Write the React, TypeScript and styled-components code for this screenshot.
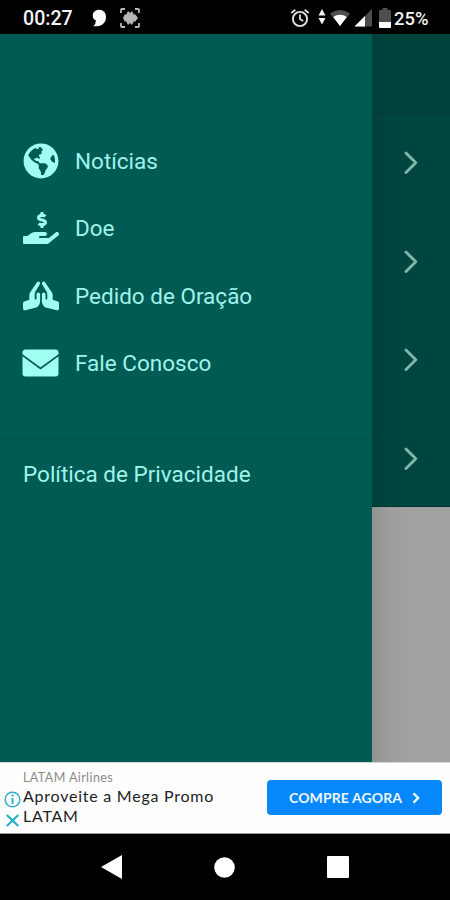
import React from "react";
import styled, { createGlobalStyle } from "styled-components";
import { FaGlobeAmericas, FaHandHoldingUsd, FaPrayingHands } from "react-icons/fa";

const GlobalStyle = createGlobalStyle`
  * { box-sizing: border-box; }
  body { margin: 0; background: #000; font-family: Roboto, sans-serif; }
  svg { display: block; flex: none; }
`;

const Screen = styled.div`
  width: 450px;
  height: 900px;
  display: flex;
  flex-direction: column;
  background: #000;
  overflow: hidden;
`;

const StatusBar = styled.header`
  height: 34px;
  flex: none;
  display: flex;
  align-items: center;
  padding: 2px 22px 0 23px;
  color: #f4f4f4;
`;

const StatusText = styled.span<{ $width: number; $size: number }>`
  width: ${(p) => p.$width}px;
  font-size: ${(p) => p.$size}px;
  font-weight: 500;
  line-height: 23px;
  white-space: nowrap;
`;

const StatusGap = styled.span<{ $w: number }>`
  width: ${(p) => p.$w}px;
`;

const Notifications = styled.div`
  display: flex;
  align-items: center;
  gap: 13px;
  margin-left: 18px;
`;

const Indicators = styled.div`
  display: flex;
  align-items: center;
  margin-left: auto;
`;

const Content = styled.main`
  height: 728px;
  flex: none;
  display: flex;
`;

const Drawer = styled.nav`
  width: 372px;
  flex: none;
  background: #005b54;
  color: #a0f3e9;
`;

const DrawerHeader = styled.div`
  height: 73px;
  border-bottom: 1px solid #00584f;
`;

const Menu = styled.ul`
  list-style: none;
  margin: 0;
  padding: 20px 0 0;
  height: 333px;
  border-bottom: 1px solid #00544e;
`;

const MenuItem = styled.li`
  height: 67.5px;
  display: flex;
  align-items: center;
  padding-left: 22px;
`;

const IconSlot = styled.span`
  width: 37px;
  display: flex;
  justify-content: center;
  margin-right: 16px;
  color: #9ffff3;
`;

const Label = styled.span`
  font-size: 22.5px;
  line-height: 30px;
  white-space: nowrap;
`;

const Policy = styled.div`
  display: flex;
  padding: 19px 0 0 23px;
`;

const Backdrop = styled.section`
  flex: 1;
  display: flex;
  flex-direction: column;
  background: linear-gradient(90deg, #929292 0, #9e9e9e 18px, #a2a2a2 40px);
`;

const PageHeader = styled.div`
  height: 80px;
  background: linear-gradient(90deg, #003f3a 0, #00433d 22px);
  border-bottom: 1px solid #003a35;
`;

const PageRows = styled.div`
  height: 393px;
  padding-left: 32px;
  background: linear-gradient(90deg, #003f3a 0, #004640 22px);
  border-bottom: 1px solid #003630;
`;

const PageRow = styled.div`
  height: 98.5px;
  display: flex;
  align-items: center;
`;

const AdBanner = styled.aside`
  height: 72px;
  flex: none;
  display: flex;
  background: #fefefe;
  border-top: 1px solid #c9d7d5;
  border-bottom: 1px solid #999;
`;

const AdControls = styled.div`
  width: 23px;
  padding: 28px 0 0 4px;
  display: flex;
  flex-direction: column;
  gap: 5px;
`;

const AdCopy = styled.div`
  width: 244px;
  padding-top: 6px;
  font-family: Lato, sans-serif;
`;

const Advertiser = styled.div`
  font-size: 12.5px;
  line-height: 17px;
  letter-spacing: 0.42px;
  color: #8a8a8a;
`;

const AdHeadline = styled.div`
  font-size: 16px;
  line-height: 19.5px;
  letter-spacing: 0.76px;
  color: #222;
  white-space: nowrap;
`;

const AdButton = styled.button`
  width: 175px;
  height: 35px;
  margin-top: 17px;
  padding: 0 21px 0 22px;
  display: flex;
  align-items: center;
  justify-content: space-between;
  border: 0;
  border-radius: 4px;
  background: #0688fb;
  color: #eff8ff;
  font: 700 14px/20px Lato, sans-serif;
  letter-spacing: 0.1px;
  white-space: nowrap;
`;

const NavigationBar = styled.footer`
  flex: 1;
  display: flex;
  align-items: center;
  justify-content: space-between;
  padding: 0 101px;
`;

const ChatIcon = () => (
  <svg width="15" height="18" viewBox="0 0 15 18">
    <path fill="#fff" d="M6.5.8C11 .5 14 3.4 14 8c0 5.2-3.6 9.2-9.3 9.3H.8c2-.8 2.7-2.2 2.6-3.7l.6-2C2 10.8.5 9 .8 6.2 1 3.2 3.4 1 6.5.8Z" />
  </svg>
);

const ScanIcon = () => (
  <svg width="20" height="20" viewBox="0 0 20 20" fill="none">
    <path stroke="#b8b8b8" strokeWidth="1.8" d="M1 5V2q0-1 1-1h3M15 1h3q1 0 1 1v3M1 15v3q0 1 1 1h3M15 19h3q1 0 1-1v-3" />
    <path fill="#b4b4b4" d="m3 10 2-4 1 1 2-4 2 2 2-2 2 4 1-1 3 4-3 4-1-1-2 4-2-2-2 2-2-4-1 1Z" />
  </svg>
);

const AlarmIcon = () => (
  <svg width="20" height="20" viewBox="0 0 20 20" fill="none" stroke="#dedede">
    <circle cx="10" cy="11" r="7.1" strokeWidth="1.9" />
    <path strokeWidth="1.8" d="m1.3 5 4-3.3M18.7 5l-4-3.3M10 6.5V11l3.2 2" />
  </svg>
);

const DataIcon = () => (
  <svg width="8" height="18" viewBox="0 0 8 18" fill="#f3f3f3">
    <path d="M4 0 7.5 6.5h-7ZM.5 9h7L4 15.5Z" />
  </svg>
);

const WifiIcon = () => (
  <svg width="22" height="18" viewBox="0 0 22 18">
    <path fill="#505050" d="M1 4.5Q11-2.7 21 4.5L11 17Z" />
    <path fill="#fff" d="M4.2 8q6.8-4.3 13.6 0L11 17Z" />
  </svg>
);

const SignalIcon = () => (
  <svg width="18" height="18" viewBox="0 0 18 18">
    <path fill="#4c4c4c" d="M18 0v17.5H.5Z" />
    <path fill="#fff" d="M11 7v10.5H.5Z" />
  </svg>
);

const BatteryIcon = () => (
  <svg width="12" height="20" viewBox="0 0 12 20">
    <path fill="#4e4e4e" d="M3.5 0h5v2H11q1 0 1 1v12H0V3q0-1 1-1h2.5Z" />
    <path fill="#fff" d="M0 14h12v5q0 1-1 1H1q-1 0-1-1Z" />
  </svg>
);

const MailIcon = () => (
  <svg width="37" height="28" viewBox="0 0 37 28">
    <rect x="0.5" y="0.5" width="36" height="27" rx="3" fill="currentColor" />
    <path d="m0 6 18.5 13.5L37 6" fill="none" stroke="#005b54" strokeWidth="1.8" />
  </svg>
);

const Chevron = () => (
  <svg width="14" height="24" viewBox="0 0 14 24">
    <path d="m2 2 9.8 9.7L2 21.5" fill="none" stroke="#80b5ab" strokeWidth="2.9" strokeLinecap="round" strokeLinejoin="round" />
  </svg>
);

const InfoIcon = () => (
  <svg width="17" height="17" viewBox="0 0 17 17" fill="none" stroke="#2db2ca">
    <circle cx="8.5" cy="8.5" r="7.3" strokeWidth="1.5" />
    <path strokeWidth="2" d="M8.5 3.5v2M8.5 7v6" />
  </svg>
);

const CloseIcon = () => (
  <svg width="17" height="15" viewBox="0 0 17 15">
    <path d="m2.8 2 11.5 11M14.3 2 2.8 13" stroke="#20adc7" strokeWidth="2" />
  </svg>
);

const ButtonArrow = () => (
  <svg width="10" height="12" viewBox="0 0 10 12">
    <path d="m2.5 1.4 4.7 4.6-4.7 4.6" fill="none" stroke="currentColor" strokeWidth="2.3" />
  </svg>
);

const menuItems = [
  { label: "Notícias", icon: <FaGlobeAmericas size={36} /> },
  { label: "Doe", icon: <FaHandHoldingUsd size={36} /> },
  { label: "Pedido de Oração", icon: <FaPrayingHands size={36} /> },
  { label: "Fale Conosco", icon: <MailIcon /> },
];

export default function App() {
  return (
    <>
      <GlobalStyle />
      <Screen>
        <StatusBar>
          <StatusText $width={51} $size={19.6}>00:27</StatusText>
          <Notifications><ChatIcon /><ScanIcon /></Notifications>
          <Indicators>
            <AlarmIcon />
            <StatusGap $w={8} /><DataIcon />
            <StatusGap $w={3} /><WifiIcon />
            <StatusGap $w={3} /><SignalIcon />
            <StatusGap $w={7} /><BatteryIcon />
            <StatusGap $w={3} /><StatusText $width={34} $size={18.4}>25%</StatusText>
          </Indicators>
        </StatusBar>
        <Content>
          <Drawer>
            <DrawerHeader />
            <Menu>
              {menuItems.map((item) => (
                <MenuItem key={item.label}>
                  <IconSlot>{item.icon}</IconSlot>
                  <Label>{item.label}</Label>
                </MenuItem>
              ))}
            </Menu>
            <Policy><Label>Política de Privacidade</Label></Policy>
          </Drawer>
          <Backdrop>
            <PageHeader />
            <PageRows>
              {[0, 1, 2, 3].map((row) => <PageRow key={row}><Chevron /></PageRow>)}
            </PageRows>
          </Backdrop>
        </Content>
        <AdBanner>
          <AdControls><InfoIcon /><CloseIcon /></AdControls>
          <AdCopy>
            <Advertiser>LATAM Airlines</Advertiser>
            <AdHeadline>Aproveite a Mega Promo<br />LATAM</AdHeadline>
          </AdCopy>
          <AdButton>COMPRE AGORA <ButtonArrow /></AdButton>
        </AdBanner>
        <NavigationBar>
          <svg width="21" height="24" viewBox="0 0 21 24"><path fill="#fff" d="M21 0v24L0 12Z" /></svg>
          <svg width="21" height="21" viewBox="0 0 21 21"><circle cx="10.5" cy="10.5" r="10.3" fill="#fff" /></svg>
          <svg width="22" height="22" viewBox="0 0 22 22"><rect width="22" height="22" rx="1" fill="#fff" /></svg>
        </NavigationBar>
      </Screen>
    </>
  );
}
